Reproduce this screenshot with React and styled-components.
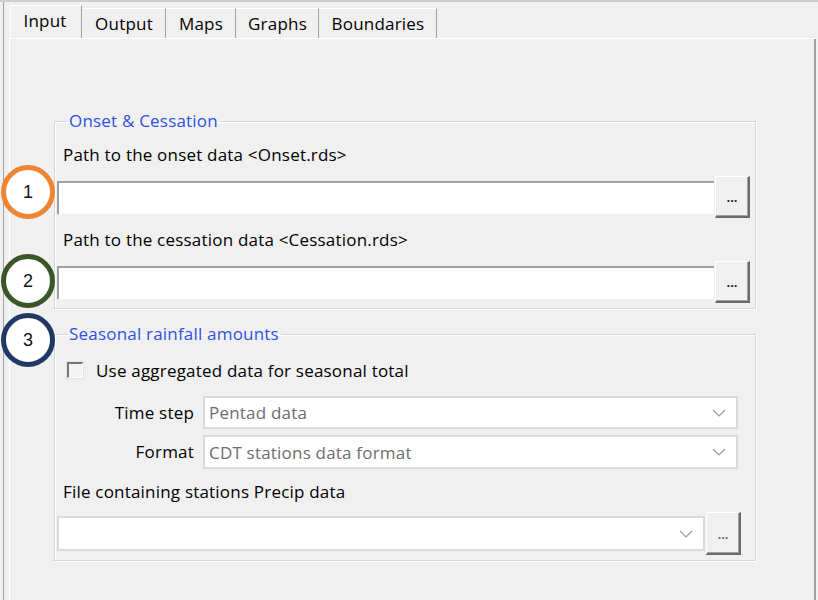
import React from 'react';
import styled, { createGlobalStyle } from 'styled-components';

const GlobalStyle = createGlobalStyle`
  html, body {
    margin: 0;
    padding: 0;
    background: #f0f0f0;
  }
  body {
    font-family: "Open Sans", "Noto Sans", sans-serif;
    font-size: 17px;
    letter-spacing: 0.2px;
    color: #000;
  }
`;

const Window = styled.div`
  position: relative;
  width: 818px;
  height: 600px;
  box-sizing: border-box;
  border-top: 2px solid #cfcfcf;
  padding-left: 3px;
  overflow: hidden;
`;

const Frame = styled.div`
  height: 100%;
  box-sizing: border-box;
  border-left: 1px solid #a0a0a0;
  padding-left: 5px;
  padding-right: 2px;
`;

const Notebook = styled.div`
  display: flex;
  flex-direction: column;
  height: 100%;
`;

const TabBar = styled.div`
  display: flex;
  align-items: flex-end;
  height: 36px;
  padding-left: 1px;
  border-bottom: 1px solid #fff;
`;

const Tab = styled.div`
  box-sizing: border-box;
  width: ${p => p.$w}px;
  height: ${p => (p.$active ? 33 : 30)}px;
  display: flex;
  justify-content: center;
  align-items: ${p => (p.$active ? 'flex-start' : 'center')};
  padding-top: ${p => (p.$active ? 3 : 0)}px;
  padding-right: ${p => (p.$active ? 2 : 0)}px;
  border-top: 1px solid #fff;
  border-left: 1px solid ${p => (p.$active ? '#fff' : 'transparent')};
  border-right: 1px solid #a0a0a0;
  background: #f0f0f0;
  line-height: 24px;
  color: #000;
`;

const Pane = styled.div`
  flex: 1;
  border-left: 1px solid #fff;
  border-right: 2px solid #a0a0a0;
  padding: 72px 58px 0 44px;
`;

const Group = styled.fieldset`
  margin: ${p => p.$top}px 0 0 0;
  padding: 0 ${p => p.$right}px 5px 2px;
  border: 1px solid #d5d5d5;
  box-shadow: inset 1px 1px 0 #fff, 1px 1px 0 #fff;
  min-width: 0;
`;

const Legend = styled.legend`
  margin-left: 10px;
  padding: 0 2px;
  line-height: 20px;
  color: #2d50e6;
`;

const Label = styled.div`
  line-height: 20px;
  margin-top: ${p => p.$top}px;
  padding-left: 6px;
  white-space: nowrap;
`;

const FieldRow = styled.div`
  display: flex;
  align-items: center;
  height: ${p => p.$h}px;
  margin-top: ${p => p.$top}px;
  margin-right: ${p => p.$shift || 0}px;
`;

const PathInput = styled.div`
  flex: 1;
  height: 33px;
  box-sizing: border-box;
  background: #fff;
  border-top: 2px solid #a0a0a0;
  border-left: 2px solid #a0a0a0;
`;

const BrowseButton = styled.button`
  width: 35px;
  height: ${p => p.$h}px;
  box-sizing: border-box;
  margin-left: 1px;
  padding: 0 0 14px;
  background: #f0f0f0;
  border: none;
  border-top: 1px solid #fff;
  border-left: 1px solid #fff;
  border-right: 2px solid #6a6a6a;
  border-bottom: 2px solid #6a6a6a;
  box-shadow: inset -1px -1px 0 #a0a0a0;
  font-family: "Open Sans", sans-serif;
  font-size: 13px;
  font-weight: 700;
  letter-spacing: 0;
  line-height: 10px;
  color: ${p => (p.$dim ? '#6d6d8a' : '#222244')};
  display: flex;
  align-items: flex-end;
  justify-content: center;
`;

const CheckRow = styled.label`
  display: flex;
  align-items: center;
  height: 20px;
  margin-top: 16px;
  padding-left: 10px;
  gap: 13px;
`;

const CheckBox = styled.span`
  width: 16px;
  height: 16px;
  box-sizing: border-box;
  border-top: 2px solid #777;
  border-left: 2px solid #777;
  border-right: 1px solid #fff;
  border-bottom: 1px solid #fff;
  box-shadow: 0 0 0 1px #e3e3e3;
  background: #f4f4f4;
`;

const SelectGrid = styled.div`
  display: grid;
  grid-template-columns: 137px 1fr;
  column-gap: 9px;
  margin-top: 16px;
`;

const SelectLabel = styled.div`
  text-align: right;
  line-height: 34px;
  margin-top: ${p => p.$top || 0}px;
`;

const Combo = styled.div`
  display: flex;
  align-items: center;
  height: ${p => p.$h || 34}px;
  box-sizing: border-box;
  margin-top: ${p => p.$top || 0}px;
  padding: 0 10px 0 4px;
  background: #fff;
  border: 2px solid #dadada;
  color: #6d6d6d;
  flex: ${p => (p.$grow ? 1 : 'none')};
`;

const ComboText = styled.span`
  flex: 1;
  white-space: nowrap;
`;

const Chevron = () => (
  <svg width="14" height="8" viewBox="0 0 14 8">
    <path d="M1 1 L7 7 L13 1" fill="none" stroke="#9a9a9a" strokeWidth="1.2" />
  </svg>
);

const Marker = styled.div`
  position: absolute;
  left: 1px;
  top: ${p => p.$top}px;
  width: 54px;
  height: 54px;
  box-sizing: border-box;
  border-radius: 50%;
  border: 5px solid ${p => p.$color};
  background: #fff;
  display: flex;
  align-items: center;
  justify-content: center;
  font-family: "Liberation Sans", sans-serif;
  font-size: 18px;
  letter-spacing: 0;
  color: #111;
`;

const tabs = [
  { name: 'Input', w: 72, active: true },
  { name: 'Output', w: 84 },
  { name: 'Maps', w: 70 },
  { name: 'Graphs', w: 83 },
  { name: 'Boundaries', w: 118 },
];

const App = () => {
  return (
    <>
      <GlobalStyle />
      <Window>
        <Frame>
          <Notebook>
            <TabBar>
              {tabs.map(t => (
                <Tab key={t.name} $active={t.active} $w={t.w}>
                  {t.name}
                </Tab>
              ))}
            </TabBar>
            <Pane>
              <Group $top={0} $right={5}>
                <Legend>Onset &amp; Cessation</Legend>
                <Label $top={14}>Path to the onset data &lt;Onset.rds&gt;</Label>
                <FieldRow $h={42} $top={11}>
                  <PathInput />
                  <BrowseButton $h={42}>...</BrowseButton>
                </FieldRow>
                <Label $top={12}>Path to the cessation data &lt;Cessation.rds&gt;</Label>
                <FieldRow $h={42} $top={11}>
                  <PathInput />
                  <BrowseButton $h={42}>...</BrowseButton>
                </FieldRow>
              </Group>

              <Group $top={15} $right={17}>
                <Legend>Seasonal rainfall amounts</Legend>
                <CheckRow>
                  <CheckBox />
                  <span>Use aggregated data for seasonal total</span>
                </CheckRow>
                <SelectGrid>
                  <SelectLabel>Time step</SelectLabel>
                  <Combo $h={33}>
                    <ComboText>Pentad data</ComboText>
                    <Chevron />
                  </Combo>
                  <SelectLabel $top={5}>Format</SelectLabel>
                  <Combo $top={5}>
                    <ComboText>CDT stations data format</ComboText>
                    <Chevron />
                  </Combo>
                </SelectGrid>
                <Label $top={13}>File containing stations Precip data</Label>
                <FieldRow $h={43} $top={10} $shift={-3}>
                  <Combo $grow $h={35}>
                    <ComboText />
                    <Chevron />
                  </Combo>
                  <BrowseButton $h={43} $dim>...</BrowseButton>
                </FieldRow>
              </Group>
            </Pane>
          </Notebook>
        </Frame>
        <Marker $top={163} $color="#ee8532">1</Marker>
        <Marker $top={252} $color="#3b5527">2</Marker>
        <Marker $top={311} $color="#1f3864">3</Marker>
      </Window>
    </>
  );
};

export default App;
